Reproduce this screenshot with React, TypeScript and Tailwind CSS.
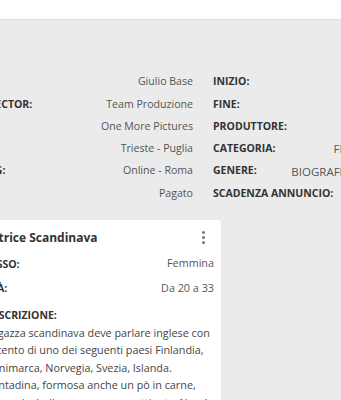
import React from 'react'

const leftRows = [
  { label: 'REGISTA:', value: 'Giulio Base' },
  { label: 'CASTING DIRECTOR:', value: 'Team Produzione' },
  { label: 'STUDIO:', value: 'One More Pictures' },
  { label: 'LOCATION:', value: 'Trieste - Puglia' },
  { label: 'SEDE CASTING:', value: 'Online - Roma' },
  { label: 'COMPENSO:', value: 'Pagato' },
]

const rightRows = [
  { label: 'INIZIO:', value: '' },
  { label: 'FINE:', value: '' },
  { label: 'PRODUTTORE:', value: '' },
  { label: 'CATEGORIA:', value: 'FILM' },
  { label: 'GENERE:', value: 'BIOGRAFICO' },
  { label: 'SCADENZA ANNUNCIO:', value: '' },
]

const descrizione = [
  'Ragazza scandinava deve parlare inglese con',
  'accento di uno dei seguenti paesi Finlandia,',
  'Danimarca, Norvegia, Svezia, Islanda.',
  'Contadina, formosa anche un pò in carne,',
  'selvaggia, bella ma sempre spettinata. Non è',
]

export default function App() {
  return (
    <div className="w-[341px] h-[400px] overflow-hidden bg-[#ebebeb] font-['Open_Sans',sans-serif] text-[#555]">
      {/* Header */}
      <div className="h-[20px] bg-white border-b border-[#e2e2e2]" />

      {/* Dettagli progetto */}
      <div className="flex pt-[51px] -ml-[71px] w-[450px]">
        <div className="w-[264px]">
          {leftRows.map((row) => (
            <div key={row.label} className="h-[22.3px] flex items-center justify-between">
              <span className="text-[10.5px] font-bold text-[#333]">{row.label}</span>
              <span className="text-[10.6px]">{row.value}</span>
            </div>
          ))}
        </div>
        <div className="w-[146px] ml-[20px]">
          {rightRows.map((row) => (
            <div key={row.label} className="h-[22.3px] flex items-center justify-between whitespace-nowrap">
              <span className="text-[10.5px] font-bold text-[#333]">{row.label}</span>
              <span className="text-[11.5px]">{row.value}</span>
            </div>
          ))}
        </div>
      </div>

      {/* Card ruolo */}
      <div className="mt-[15px] -ml-[31px] w-[252px] bg-white rounded-r-[4px] pl-[16px] pr-[7px] pt-[8px] pb-4">
        <div className="h-[20px] flex items-center justify-between">
          <span className="text-[12px] font-bold text-[#333]">Attrice Scandinava</span>
          <span className="flex flex-col gap-[2px] mr-[9px]">
            <span className="w-[3px] h-[3px] rounded-full bg-[#777]" />
            <span className="w-[3px] h-[3px] rounded-full bg-[#777]" />
            <span className="w-[3px] h-[3px] rounded-full bg-[#777]" />
          </span>
        </div>
        <div className="mt-[5px] h-[24px] flex items-center justify-between">
          <span className="text-[10.5px] font-bold text-[#333]">SESSO:</span>
          <span className="text-[10.8px] -mt-[3px]">Femmina</span>
        </div>
        <div className="h-[25px] flex items-center justify-between">
          <span className="text-[10.5px] font-bold text-[#333]">ETÀ:</span>
          <span className="text-[10.8px] -mt-[3px]">Da 20 a 33</span>
        </div>
        <div className="mt-[4px] h-[20px] flex items-center">
          <span className="text-[10.5px] font-bold text-[#333]">DESCRIZIONE:</span>
        </div>
        <div className="-mt-[2px] text-[10.8px] leading-[17.5px] text-[#444] whitespace-nowrap">
          {descrizione.map((line) => (
            <div key={line}>{line}</div>
          ))}
        </div>
      </div>
    </div>
  )
}
